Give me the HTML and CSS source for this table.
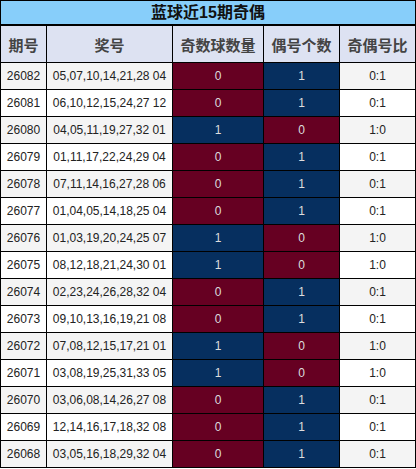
FILE: index.html
```html
<!DOCTYPE html>
<html>
<head>
<meta charset="utf-8">
<link rel="stylesheet" href="styles.css">
</head>
<body>
<div class="table">
  <div class="title">蓝球近15期奇偶</div>
  <div class="grid">
    <div class="th">期号</div><div class="th">奖号</div><div class="th">奇数球数量</div><div class="th">偶号个数</div><div class="th">奇偶号比</div>

    <div class="td g">26082</div><div class="td g">05,07,10,14,21,28 04</div><div class="td red">0</div><div class="td blue">1</div><div class="td g">0:1</div>
    <div class="td">26081</div><div class="td">06,10,12,15,24,27 12</div><div class="td red">0</div><div class="td blue">1</div><div class="td">0:1</div>
    <div class="td g">26080</div><div class="td g">04,05,11,19,27,32 01</div><div class="td blue">1</div><div class="td red">0</div><div class="td g">1:0</div>
    <div class="td">26079</div><div class="td">01,11,17,22,24,29 04</div><div class="td red">0</div><div class="td blue">1</div><div class="td">0:1</div>
    <div class="td g">26078</div><div class="td g">07,11,14,16,27,28 06</div><div class="td red">0</div><div class="td blue">1</div><div class="td g">0:1</div>
    <div class="td">26077</div><div class="td">01,04,05,14,18,25 04</div><div class="td red">0</div><div class="td blue">1</div><div class="td">0:1</div>
    <div class="td g">26076</div><div class="td g">01,03,19,20,24,25 07</div><div class="td blue">1</div><div class="td red">0</div><div class="td g">1:0</div>
    <div class="td">26075</div><div class="td">08,12,18,21,24,30 01</div><div class="td blue">1</div><div class="td red">0</div><div class="td">1:0</div>
    <div class="td g">26074</div><div class="td g">02,23,24,26,28,32 04</div><div class="td red">0</div><div class="td blue">1</div><div class="td g">0:1</div>
    <div class="td">26073</div><div class="td">09,10,13,16,19,21 08</div><div class="td red">0</div><div class="td blue">1</div><div class="td">0:1</div>
    <div class="td g">26072</div><div class="td g">07,08,12,15,17,21 01</div><div class="td blue">1</div><div class="td red">0</div><div class="td g">1:0</div>
    <div class="td">26071</div><div class="td">03,08,19,25,31,33 05</div><div class="td blue">1</div><div class="td red">0</div><div class="td">1:0</div>
    <div class="td g">26070</div><div class="td g">03,06,08,14,26,27 08</div><div class="td red">0</div><div class="td blue">1</div><div class="td g">0:1</div>
    <div class="td">26069</div><div class="td">12,14,16,17,18,32 08</div><div class="td red">0</div><div class="td blue">1</div><div class="td">0:1</div>
    <div class="td g">26068</div><div class="td g">03,05,16,18,29,32 04</div><div class="td red">0</div><div class="td blue">1</div><div class="td g">0:1</div>
  </div>
</div>
</body>
</html>
```
FILE: styles.css
```css
html, body {
  margin: 0;
  padding: 0;
  background: #ffffff;
}
.table {
  width: 416px;
  box-sizing: border-box;
  border: 1px solid #000;
  font-family: "Liberation Sans", Arial, "Noto Sans CJK SC", sans-serif;
}
.title {
  height: 23px;
  line-height: 23px;
  background: #87cefa;
  border-bottom: 2px solid #000;
  text-align: center;
  font-weight: bold;
  font-size: 16px;
  color: #111;
}
.grid {
  display: grid;
  grid-template-columns: 45px 125px 90px 75px 75px;
  grid-auto-rows: 26px;
  gap: 1px;
  background: #000;
}
.th {
  height: 36px;
  display: flex;
  align-items: center;
  justify-content: center;
  background: #dde2f2;
  color: #444;
  font-weight: bold;
  font-size: 15px;
}
.grid > .th { grid-row: 1; }
.grid { grid-template-rows: 36px; }
.td {
  display: flex;
  align-items: center;
  justify-content: center;
  background: #fff;
  color: #222;
  font-size: 12px;
}
.td.g { background: #f4f4f4; }
.td.red { background: #660022; color: #dddddd; }
.td.blue { background: #062f5f; color: #dddddd; }
```
